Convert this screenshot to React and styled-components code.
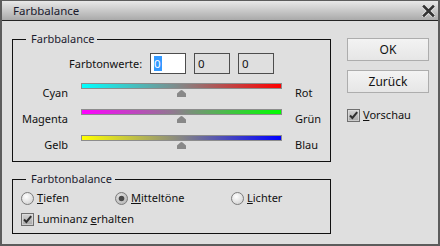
import React from 'react';
import styled, { createGlobalStyle } from 'styled-components';

const Global = createGlobalStyle`
  html, body { margin: 0; padding: 0; background: #dfdfdf; }
  body { font-family: "Noto Sans", "DejaVu Sans", sans-serif; }
`;

const Window = styled.div`
  width: 440px;
  height: 246px;
  box-sizing: border-box;
  border: 2px solid #5c5c5c;
  border-top-width: 1px;
  background: #dfdfdf;
  display: flex;
  flex-direction: column;
  color: #111;
`;

const TitleBar = styled.div`
  height: 19px;
  border-bottom: 1px solid #262626;
  background: linear-gradient(#e8e8e8, #aaaaaa);
  display: flex;
  align-items: center;
  justify-content: space-between;
  padding: 0 3px 0 11px;
`;

const Title = styled.span`
  font-size: 11.5px;
  color: #1a1a2e;
  line-height: 19px;
`;

const Body = styled.div`
  display: flex;
  padding: 10px 0 0 10px;
`;

const LeftCol = styled.div`
  width: 319px;
  display: flex;
  flex-direction: column;
  gap: 9px;
`;

const Group = styled.fieldset`
  margin: 0;
  padding: 0;
  border: 1px solid #111;
  min-width: 0;
`;

const Legend = styled.legend`
  margin-left: 13px;
  padding: 0 3px 0 5px;
  font-size: 11px;
  line-height: 16px;
  color: #1a1a2e;
`;

const Group1Content = styled.div`
  padding-top: 6px;
  display: flex;
  flex-direction: column;
`;

const ValuesRow = styled.div`
  display: flex;
  align-items: center;
  padding-left: 56px;
  margin-bottom: 9px;
`;

const ValuesLabel = styled.span`
  width: 81px;
  font-size: 11px;
  line-height: 16px;
`;

const Inputs = styled.div`
  display: flex;
  gap: 8px;
`;

const NumBox = styled.div`
  width: 36px;
  height: 21px;
  box-sizing: border-box;
  border: 1px solid #4d4d4d;
  background: ${p => (p.$active ? '#fff' : '#dfdfdf')};
  font-size: 11.5px;
  line-height: 19px;
  padding-left: 3px;
`;

const Sel = styled.span`
  background: #3399ff;
  color: #fff;
  display: inline-block;
  line-height: 15px;
  padding: 0 1px 0 0;
`;

const SliderRow = styled.div`
  display: grid;
  grid-template-columns: 55px 201px auto;
  column-gap: 13px;
  height: 26px;
`;

const SideLabel = styled.span`
  font-size: 11px;
  line-height: 16px;
  padding-top: 2px;
  text-align: ${p => p.$align};
`;

const TrackWrap = styled.div`
  position: relative;
`;

const Track = styled.div`
  height: 4px;
  border: 1px solid #8c8c8c;
  background: linear-gradient(to right, ${p => p.$from}, #858585 50%, ${p => p.$to});
`;

const ThumbIcon = styled.svg`
  position: absolute;
  top: 7px;
  margin-left: -4.5px;
`;

const Group2Content = styled.div`
  padding: 3px 0 6px 8px;
  display: flex;
  flex-direction: column;
  gap: 5px;
`;

const RadioRow = styled.div`
  display: grid;
  grid-template-columns: 94px 116px auto;
`;

const Choice = styled.label`
  display: flex;
  align-items: center;
  gap: 3px;
  font-size: 11px;
  line-height: 16px;
  height: 16px;
`;

const RightCol = styled.div`
  margin-left: 16px;
  padding-top: 7px;
  display: flex;
  flex-direction: column;
  gap: 9px;
`;

const Button = styled.button`
  width: 82px;
  height: 23px;
  box-sizing: border-box;
  border: 1px solid #adadad;
  background: linear-gradient(#f3f3f3, #e6e6e6);
  font-family: "Noto Sans", "DejaVu Sans", sans-serif;
  font-size: 12px;
  color: #111;
  padding: 0;
  margin: 0;
`;

const PreviewCheck = styled(Choice)`
  margin-top: 5px;
`;

const CloseIcon = () => (
  <svg width="13" height="12" viewBox="0 0 13 12">
    <path d="M2 1.5 L11 10.5 M11 1.5 L2 10.5" stroke="#e8e8e8" strokeWidth="4.2" strokeLinecap="square" />
    <path d="M2 1.5 L11 10.5 M11 1.5 L2 10.5" stroke="#333" strokeWidth="2.6" strokeLinecap="square" />
  </svg>
);

const Checkbox = () => (
  <svg width="13" height="13" viewBox="0 0 13 13">
    <defs>
      <linearGradient id="cbg" x1="0" y1="0" x2="0" y2="1">
        <stop offset="0" stopColor="#d6d6d6" />
        <stop offset="1" stopColor="#a6a6a6" />
      </linearGradient>
    </defs>
    <rect x="0.5" y="0.5" width="12" height="12" fill="url(#cbg)" stroke="#6f6f6f" />
    <rect x="1.5" y="1.5" width="10" height="10" fill="none" stroke="#e2e2e2" strokeOpacity="0.6" />
    <path d="M3 6.5 L5.4 9 L10.2 3.2" fill="none" stroke="#2e2e2e" strokeWidth="2" />
  </svg>
);

const Radio = ({ checked }) => (
  <svg width="13" height="13" viewBox="0 0 13 13">
    <defs>
      <radialGradient id={checked ? 'rgc' : 'rg'} cx="0.4" cy="0.35" r="0.7">
        <stop offset="0" stopColor={checked ? '#e6e6e6' : '#ffffff'} />
        <stop offset="1" stopColor={checked ? '#b4b4b4' : '#d2d2d2'} />
      </radialGradient>
    </defs>
    <circle cx="6.5" cy="6.5" r="6" fill={`url(#${checked ? 'rgc' : 'rg'})`} stroke="#7c7c7c" />
    {checked && <circle cx="6.5" cy="6.5" r="2.8" fill="#4a4a4a" />}
  </svg>
);

const Thumb = ({ pct }) => (
  <ThumbIcon width="9" height="7" viewBox="0 0 9 7" style={{ left: `${pct}%` }}>
    <path d="M4.5 0 Q5 0 5.6 0.6 L9 3.6 L9 7 L0 7 L0 3.6 L3.4 0.6 Q4 0 4.5 0 Z" fill="#888" />
  </ThumbIcon>
);

const sliders = [
  { left: 'Cyan', right: 'Rot', from: '#00ffff', to: '#ff0000', value: 0 },
  { left: 'Magenta', right: 'Grün', from: '#ff00ff', to: '#00ff00', value: 0 },
  { left: 'Gelb', right: 'Blau', from: '#ffff00', to: '#0000ff', value: 0 },
];

export default function App() {
  return (
    <>
      <Global />
      <Window>
        <TitleBar>
          <Title>Farbbalance</Title>
          <CloseIcon />
        </TitleBar>
        <Body>
          <LeftCol>
            <Group>
              <Legend>Farbbalance</Legend>
              <Group1Content>
                <ValuesRow>
                  <ValuesLabel>Farbtonwerte:</ValuesLabel>
                  <Inputs>
                    <NumBox $active><Sel>0</Sel></NumBox>
                    <NumBox>0</NumBox>
                    <NumBox>0</NumBox>
                  </Inputs>
                </ValuesRow>
                {sliders.map(s => (
                  <SliderRow key={s.left}>
                    <SideLabel $align="right">{s.left}</SideLabel>
                    <TrackWrap>
                      <Track $from={s.from} $to={s.to} />
                      <Thumb pct={50 + s.value / 2} />
                    </TrackWrap>
                    <SideLabel $align="left">{s.right}</SideLabel>
                  </SliderRow>
                ))}
              </Group1Content>
            </Group>
            <Group>
              <Legend>Farbtonbalance</Legend>
              <Group2Content>
                <RadioRow>
                  <Choice><Radio /><span><u>T</u>iefen</span></Choice>
                  <Choice><Radio checked /><span><u>M</u>itteltöne</span></Choice>
                  <Choice><Radio /><span><u>L</u>ichter</span></Choice>
                </RadioRow>
                <Choice><Checkbox /><span>Luminanz <u>e</u>rhalten</span></Choice>
              </Group2Content>
            </Group>
          </LeftCol>
          <RightCol>
            <Button>OK</Button>
            <Button>Zurück</Button>
            <PreviewCheck><Checkbox /><span><u>V</u>orschau</span></PreviewCheck>
          </RightCol>
        </Body>
      </Window>
    </>
  );
}
